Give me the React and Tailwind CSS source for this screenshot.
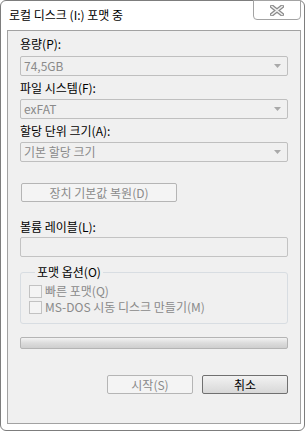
import React from "react"

const font = { fontFamily: '"Noto Sans CJK KR", "Noto Sans", sans-serif' }

const Arrow = () => (
  <svg width="7" height="4" viewBox="0 0 7 4" className="shrink-0">
    <path d="M0 0 H7 L3.5 4 Z" fill="#a9a9a9" />
  </svg>
)

const Dropdown = ({ value, className = "" }) => (
  <div
    className={`flex items-center justify-between h-[20px] pl-[3px] pr-[6px] border border-[#bfbfbf] rounded-[2px] bg-[#f0f0f0] text-[#8a8a8a] leading-[18px] ${className}`}
  >
    <span>{value}</span>
    <Arrow />
  </div>
)

const Label = ({ children, className = "" }) => (
  <div className={`h-[16px] leading-[16px] text-black ${className}`}>{children}</div>
)

const Check = ({ label }) => (
  <div className="flex items-center h-[16px]">
    <div className="w-[13px] h-[13px] border border-[#c2c2c2] bg-[#f4f4f4] shrink-0" />
    <span className="ml-[3px] leading-[16px] text-[#8a8a8a]">{label}</span>
  </div>
)

const CloseIcon = () => (
  <svg width="14" height="11" viewBox="0 0 14 11">
    <path d="M2 1.5 L12 9.5 M12 1.5 L2 9.5" stroke="#8c8c8c" strokeWidth="4" strokeLinecap="square" />
    <path d="M2 1.5 L12 9.5 M12 1.5 L2 9.5" stroke="#f2f2f2" strokeWidth="1.6" strokeLinecap="square" />
  </svg>
)

export default function App() {
  return (
    <div className="w-[308px] h-[431px] bg-white text-[12px]" style={font}>
      <div className="flex flex-col w-[305px] h-[431px] border border-[#7d7d7d] rounded-[6px] bg-white pl-[6px] pr-[3px] pb-[6px]">
        {/* title bar */}
        <div className="flex items-start justify-between h-[29px] shrink-0">
          <span className="mt-[6px] ml-[2px] leading-[16px] text-black">로컬 디스크 (I:) 포맷 중</span>
          <button className="flex items-center justify-center -mt-px w-[48px] h-[20px] border border-[#a3a3a3] rounded-b-[4px] bg-white">
            <CloseIcon />
          </button>
        </div>

        {/* client area */}
        <div className="flex flex-col flex-1 border border-[#a2a2a2] bg-[#f0f0f0] px-[12px] pt-[5px]">
          <Label>용량(P):</Label>
          <Dropdown value="74,5GB" className="mt-[4px]" />

          <Label className="mt-[4px]">파일 시스템(F):</Label>
          <Dropdown value="exFAT" className="mt-[3px]" />

          <Label className="mt-[4px]">할당 단위 크기(A):</Label>
          <Dropdown value="기본 할당 크기" className="mt-[3px]" />

          <button className="mt-[21px] w-[156px] h-[19px] border border-[#b5b5b5] rounded-[2px] bg-[#f4f4f4] text-[#8a8a8a] leading-[17px] ml-px">
            장치 기본값 복원(D)
          </button>

          <Label className="mt-[17px]">볼륨 레이블(L):</Label>
          <div className="mt-[2px] h-[20px] border border-[#c3c3c3] rounded-[2px] bg-[#f0f0f0]" />

          <fieldset className="mt-[7px] h-[60px] border border-[#d8dde2] rounded-[3px] px-[8px] pt-[3px]">
            <legend className="ml-[6px] px-[2px] leading-[16px] text-black">포맷 옵션(O)</legend>
            <Check label="빠른 포맷(Q)" />
            <Check label="MS-DOS 시동 디스크 만들기(M)" />
          </fieldset>

          <div className="mt-[13px] h-[12px] border border-[#b4b4b4] rounded-[2px] bg-gradient-to-b from-[#f3f3f3] via-[#dcdcdc] to-[#cfcfcf]" />

          <div className="flex justify-end gap-[9px] mt-[26px]">
            <button className="w-[86px] h-[19px] border border-[#b5b5b5] rounded-[2px] bg-[#f4f4f4] text-[#8a8a8a] leading-[17px]">
              시작(S)
            </button>
            <button className="w-[86px] h-[19px] border border-[#707070] rounded-[2px] bg-gradient-to-b from-[#f2f2f2] to-[#d8d8d8] text-black leading-[17px]">
              취소
            </button>
          </div>
        </div>
      </div>
    </div>
  )
}
